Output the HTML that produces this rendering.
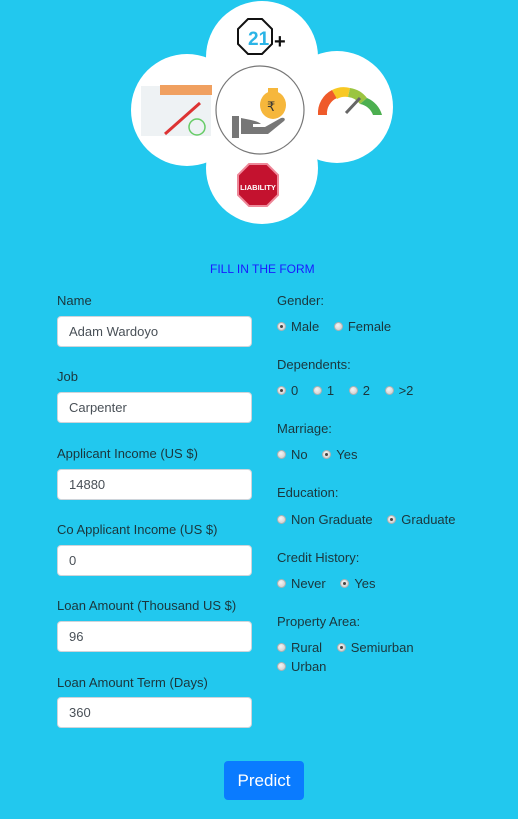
<!DOCTYPE html>
<html><head><meta charset="utf-8"><style>
*{margin:0;padding:0;box-sizing:border-box}
body{width:518px;height:819px;background:#22c8ee;font-family:"Liberation Sans",sans-serif;position:relative;overflow:hidden;color:#1b363c;font-size:13px}
.a{position:absolute;white-space:nowrap}
.inp{position:absolute;left:57px;width:195px;height:31px;background:#fff;border:1px solid #ced4da;border-radius:4px;padding:0 0 0 11px;line-height:29px;color:#495057;font-size:13px}
.r{display:inline-block;width:9px;height:9px;border-radius:50%;background:radial-gradient(circle at 40% 35%,#f4f4f4,#c8c8c8);border:1px solid #b0b0b0;vertical-align:0px;margin-right:5px;position:relative}
.r.on::after{content:"";position:absolute;left:2px;top:2px;width:3px;height:3px;border-radius:50%;background:#444}
.opt{margin-right:11px}
</style></head><body>
<svg class="a" style="left:0;top:0" width="518" height="230">
<g fill="#fff">
<circle cx="262" cy="57" r="56"/>
<circle cx="187" cy="110" r="56"/>
<circle cx="337" cy="107" r="56"/>
<circle cx="262" cy="168" r="56"/>
<rect x="210" y="60" width="100" height="100"/>
</g>
<circle cx="260" cy="110" r="44" fill="#fff" stroke="#777" stroke-width="1.2"/>
<polygon points="248,19 262,19 272,29 272,44 262,54 248,54 238,44 238,29" fill="none" stroke="#111" stroke-width="2"/>
<text x="248" y="45" font-size="19" font-weight="bold" fill="#2bb4e6" font-family="Liberation Sans">21</text>
<text x="274" y="48" font-size="20" font-weight="bold" fill="#111">+</text>
<ellipse cx="273" cy="105" rx="13" ry="14" fill="#f6b73c"/>
<rect x="268" y="88" width="10" height="6" fill="#f6b73c"/>
<text x="267" y="111" font-size="13" fill="#333">₹</text>
<path d="M232 116h7v22h-7z M241 118l10 2c4 1 8 2 10 4h-8v3h12l16-9c3-1 5 1 3 3l-16 13h-27z" fill="#777"/>
<path d="M318 115a26 26 0 0 1 14-25l5 8a17 17 0 0 0-10 17z" fill="#ef5a2a"/>
<path d="M332 90a26 26 0 0 1 18-2l-2 9a17 17 0 0 0-11 2z" fill="#f8c823"/>
<path d="M350 88a26 26 0 0 1 17 10l-7 6a17 17 0 0 0-12-7z" fill="#9bc540"/>
<path d="M367 98a26 26 0 0 1 15 17h-9a17 17 0 0 0-13-11z" fill="#4caf50"/>
<line x1="346" y1="113" x2="360" y2="98" stroke="#666" stroke-width="3"/>
<rect x="141" y="86" width="70" height="50" fill="#eef2f4"/>
<rect x="160" y="85" width="52" height="10" fill="#f0a060"/>
<line x1="165" y1="134" x2="200" y2="103" stroke="#d33" stroke-width="3"/>
<circle cx="197" cy="127" r="8" fill="none" stroke="#6c6" stroke-width="1.5"/>
<polygon points="249,164 267,164 278,175 278,195 267,206 249,206 238,195 238,175" fill="#c4122f" stroke="#e89" stroke-width="2"/>
<text x="258" y="190" text-anchor="middle" font-size="7.5" font-weight="bold" fill="#fff">LIABILITY</text>
</svg>
<div class="a" style="left:210px;top:262px;color:#1a1aff;font-size:12px">FILL IN THE FORM</div>

<div class="a" style="left:57px;top:293px">Name</div>
<div class="inp" style="top:316px">Adam Wardoyo</div>
<div class="a" style="left:57px;top:369px">Job</div>
<div class="inp" style="top:392px">Carpenter</div>
<div class="a" style="left:57px;top:446px">Applicant Income (US $)</div>
<div class="inp" style="top:469px">14880</div>
<div class="a" style="left:57px;top:522px">Co Applicant Income (US $)</div>
<div class="inp" style="top:545px">0</div>
<div class="a" style="left:57px;top:598px">Loan Amount (Thousand US $)</div>
<div class="inp" style="top:621px">96</div>
<div class="a" style="left:57px;top:675px">Loan Amount Term (Days)</div>
<div class="inp" style="top:697px">360</div>

<div class="a" style="left:277px;top:293px">Gender:</div>
<div class="a" style="left:277px;top:319px"><span class="r on"></span><span class="opt">Male</span> <span class="r"></span>Female</div>
<div class="a" style="left:277px;top:357px">Dependents:</div>
<div class="a" style="left:277px;top:383px"><span class="r on"></span><span class="opt">0</span> <span class="r"></span><span class="opt">1</span> <span class="r"></span><span class="opt">2</span> <span class="r"></span>&gt;2</div>
<div class="a" style="left:277px;top:421px">Marriage:</div>
<div class="a" style="left:277px;top:447px"><span class="r"></span><span class="opt">No</span> <span class="r on"></span>Yes</div>
<div class="a" style="left:277px;top:485px">Education:</div>
<div class="a" style="left:277px;top:512px"><span class="r"></span><span class="opt">Non Graduate</span> <span class="r on"></span>Graduate</div>
<div class="a" style="left:277px;top:550px">Credit History:</div>
<div class="a" style="left:277px;top:576px"><span class="r"></span><span class="opt">Never</span> <span class="r on"></span>Yes</div>
<div class="a" style="left:277px;top:614px">Property Area:</div>
<div class="a" style="left:277px;top:640px"><span class="r"></span><span class="opt">Rural</span> <span class="r on"></span>Semiurban</div>
<div class="a" style="left:277px;top:659px"><span class="r"></span>Urban</div>

<div class="a" style="left:224px;top:761px;width:80px;height:39px;background:#0a7bff;border-radius:4px;color:#fff;font-size:17px;line-height:39px;text-align:center">Predict</div>
</body></html>
